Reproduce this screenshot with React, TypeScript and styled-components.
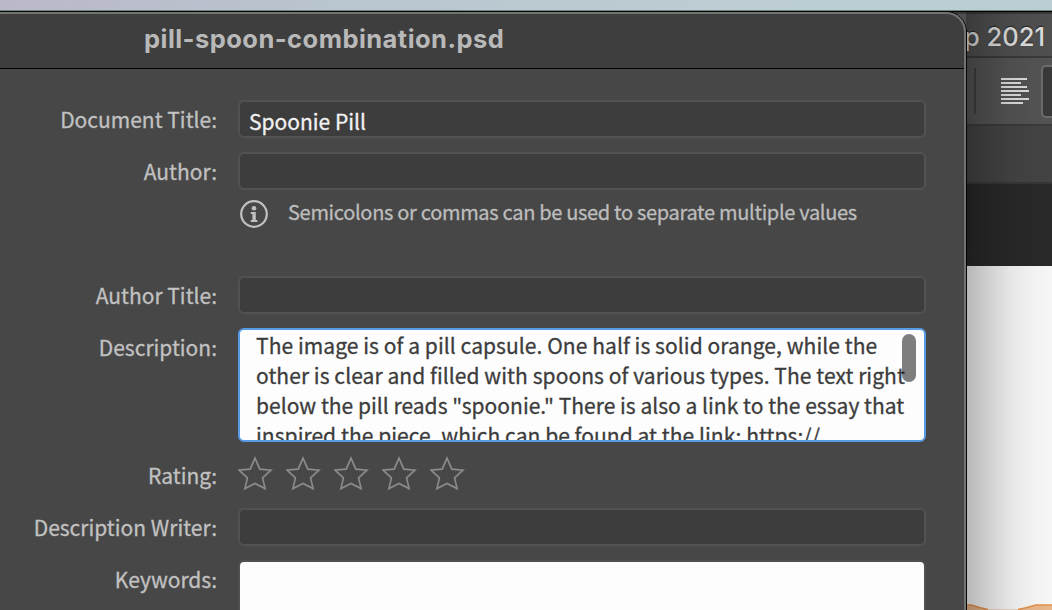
import React from "react";
import styled, { createGlobalStyle } from "styled-components";

const Global = createGlobalStyle`
  * { box-sizing: border-box; }
  body { margin: 0; overflow: hidden; }
`;

const ui = `"Noto Sans CJK SC", "Noto Sans", sans-serif`;
const system = `Inter, "Liberation Sans", sans-serif`;

const Screen = styled.div`
  position: relative;
  width: 1052px;
  height: 610px;
  overflow: hidden;
  display: flex;
  flex-direction: column;
  background: #272727;
`;

const Wallpaper = styled.div`
  flex: none;
  height: 11px;
  background: linear-gradient(90deg, #bbb8c9 0, #b9c5cf 330px, #bdced3 800px, #bcced2 100%);
  border-bottom: 1px solid #6f8682;
`;

const AppWindow = styled.div`
  position: relative;
  flex: 1;
  display: flex;
  flex-direction: column;
  border-top: 1px solid #000;
  &::after {
    content: "";
    position: absolute;
    top: 0;
    bottom: 0;
    right: 0;
    width: 86px;
    background: linear-gradient(
      90deg,
      rgba(0, 0, 0, 0.27) 0,
      rgba(0, 0, 0, 0.17) 22px,
      rgba(0, 0, 0, 0.08) 44px,
      rgba(0, 0, 0, 0.03) 66px,
      rgba(0, 0, 0, 0.01) 100%
    );
  }
`;

const AppTitle = styled.div`
  height: 46px;
  display: flex;
  justify-content: flex-end;
  align-items: center;
  padding: 3px 7px 0 0;
  background: #505050;
  border-top: 2px solid #3a3a3a;
  border-bottom: 2px solid #3a3a3a;
  font: 500 25.5px ${system};
  color: #e0e0e0;
  text-shadow: 0 -1px 1px #222;
`;

const OptionsBar = styled.div`
  height: 68px;
  display: flex;
  justify-content: flex-end;
  align-items: center;
  background: #545454;
  border-bottom: 2px solid #3b3b3b;
`;

const Divider = styled.div`
  width: 2px;
  height: 46px;
  margin-right: 25px;
  background: #3e3e3e;
`;

const OptionSlot = styled.div`
  width: 11px;
  height: 53px;
  margin-left: 12px;
  border: 2px solid #6d6d6d;
  border-right: 0;
  border-radius: 5px 0 0 5px;
  background: #393939;
`;

const TabStrip = styled.div`
  height: 58px;
  background: #444;
  border-bottom: 2px solid #373737;
`;

const Pasteboard = styled.div`
  height: 82px;
  background: #292929;
`;

const Artboard = styled.div`
  flex: 1;
  display: flex;
  justify-content: flex-end;
  align-items: flex-end;
  background: #f9f9f9;
`;

const Dialog = styled.section`
  position: absolute;
  left: -30px;
  top: 11px;
  width: 997px;
  height: 660px;
  padding-left: 30px;
  border: 1px solid #050505;
  border-radius: 21px;
  background: #474747;
  &::after {
    content: "";
    position: absolute;
    inset: 0;
    border: 2px solid #727472;
    border-left: 0;
    border-radius: 20px;
    pointer-events: none;
  }
`;

const DialogHeader = styled.header`
  height: 57px;
  margin-left: -30px;
  padding: 12px 0 0 173px;
  border-radius: 20px 20px 0 0;
  border-bottom: 1px solid #000;
  background: #3e3e3e;
  font: 700 25.5px/30px ${system};
  letter-spacing: 0.45px;
  color: #b9b9b9;
  white-space: nowrap;
`;

const Form = styled.div`
  display: grid;
  grid-template-columns: 216px 688px;
  column-gap: 21px;
  row-gap: 14px;
  padding-top: 31px;
`;

const Label = styled.label`
  font: 400 21px/38px ${ui};
  -webkit-text-stroke: 0.3px;
  text-align: right;
  color: #c1c1c1;
  white-space: nowrap;
`;

const Field = styled.div`
  height: 38px;
  padding: 2px 9px 0;
  border: 2px solid #525252;
  border-radius: 6px;
  background: #3d3d3d;
  font: 400 21px/34px ${ui};
  -webkit-text-stroke: 0.3px;
  color: #f2f2f2;
`;

const AuthorCell = styled.div`
  height: 110px;
`;

const Hint = styled.div`
  display: flex;
  gap: 20px;
  padding: 10px 0 0 2px;
  color: #bdbdbd;
`;

const HintText = styled.span`
  margin-top: -2px;
  font: 400 20px/28px ${ui};
  letter-spacing: -0.31px;
  -webkit-text-stroke: 0.3px;
  white-space: nowrap;
`;

const TextArea = styled.div`
  position: relative;
  height: 114px;
  padding: 0 16px;
  overflow: hidden;
  border: 2px solid #579be6;
  border-radius: 6px;
  background: #fdfdfd;
  color: #3c3c3c;
`;

const Line = styled.div<{ $track: number }>`
  font: 400 21px/30px ${ui};
  letter-spacing: ${(p) => p.$track}px;
  -webkit-text-stroke: 0.3px;
  white-space: nowrap;
`;

const Thumb = styled.div`
  position: absolute;
  top: 4px;
  right: 8px;
  width: 14px;
  height: 48px;
  border-radius: 7px;
  background: rgba(0, 0, 0, 0.5);
`;

const Stars = styled.div`
  display: flex;
  gap: 12px;
  height: 38px;
`;

const Keywords = styled.div`
  height: 114px;
  border: 2px solid #505050;
  border-radius: 6px;
  background: #fdfdfd;
`;

const lineWidths = [26, 20, 26, 28, 20, 28, 22];

const ParagraphIcon = () => (
  <svg width="28" height="26" viewBox="0 0 28 26">
    {lineWidths.map((w, i) => (
      <rect key={i} x="0" y={i * 4} width={w} height="2" fill="#dedede" />
    ))}
  </svg>
);

const InfoIcon = () => (
  <svg width="28" height="28" viewBox="0 0 28 28">
    <circle cx="14" cy="14" r="12.8" fill="none" stroke="#c0c0c0" strokeWidth="2.2" />
    <circle cx="14" cy="8.2" r="2.3" fill="#c0c0c0" />
    <path d="M10.8 12H15.8V20H17.4V22H10.8V20H12.4V14H10.8Z" fill="#c0c0c0" />
  </svg>
);

const Star = () => (
  <svg width="36" height="36" viewBox="0 0 36 36">
    <path
      d="M17 4.6L21.8 15.6L33 16.5L24.6 24.3L27.1 35L17 29.8L6.9 35L9.4 24.3L1 16.5L12.2 15.6Z"
      transform="translate(0 -2.4)"
      fill="none"
      stroke="#8b8b8b"
      strokeWidth="1.7"
    />
  </svg>
);

const Artwork = () => (
  <svg width="86" height="7" viewBox="0 0 86 7">
    <path d="M0 2H5Q14 5 22 6.5H52Q60 5 70 2H86V7H0Z" fill="#eab98d" />
    <path d="M0 2H5Q14 5 22 6.5M52 6.5Q60 5 70 2H86" fill="none" stroke="#e8924c" strokeWidth="1.6" />
  </svg>
);

const description = [
  { text: "The image is of a pill capsule. One half is solid orange, while the", track: 0.065 },
  { text: "other is clear and filled with spoons of various types. The text right", track: 0.065 },
  { text: 'below the pill reads "spoonie." There is also a link to the essay that', track: 0.02 },
  { text: "inspired the piece, which can be found at the link: https://", track: 0.05 },
];

export default function App() {
  return (
    <Screen>
      <Global />
      <Wallpaper />
      <AppWindow>
        <AppTitle>p 2021</AppTitle>
        <OptionsBar>
          <Divider />
          <ParagraphIcon />
          <OptionSlot />
        </OptionsBar>
        <TabStrip />
        <Pasteboard />
        <Artboard>
          <Artwork />
        </Artboard>
      </AppWindow>
      <Dialog>
        <DialogHeader>pill-spoon-combination.psd</DialogHeader>
        <Form>
          <Label>Document Title:</Label>
          <Field>Spoonie Pill</Field>
          <Label>Author:</Label>
          <AuthorCell>
            <Field />
            <Hint>
              <InfoIcon />
              <HintText>Semicolons or commas can be used to separate multiple values</HintText>
            </Hint>
          </AuthorCell>
          <Label>Author Title:</Label>
          <Field />
          <Label>Description:</Label>
          <TextArea>
            {description.map((l) => (
              <Line key={l.text} $track={l.track}>
                {l.text}
              </Line>
            ))}
            <Thumb />
          </TextArea>
          <Label>Rating:</Label>
          <Stars>
            {[1, 2, 3, 4, 5].map((n) => (
              <Star key={n} />
            ))}
          </Stars>
          <Label>Description Writer:</Label>
          <Field />
          <Label>Keywords:</Label>
          <Keywords />
        </Form>
      </Dialog>
    </Screen>
  );
}
